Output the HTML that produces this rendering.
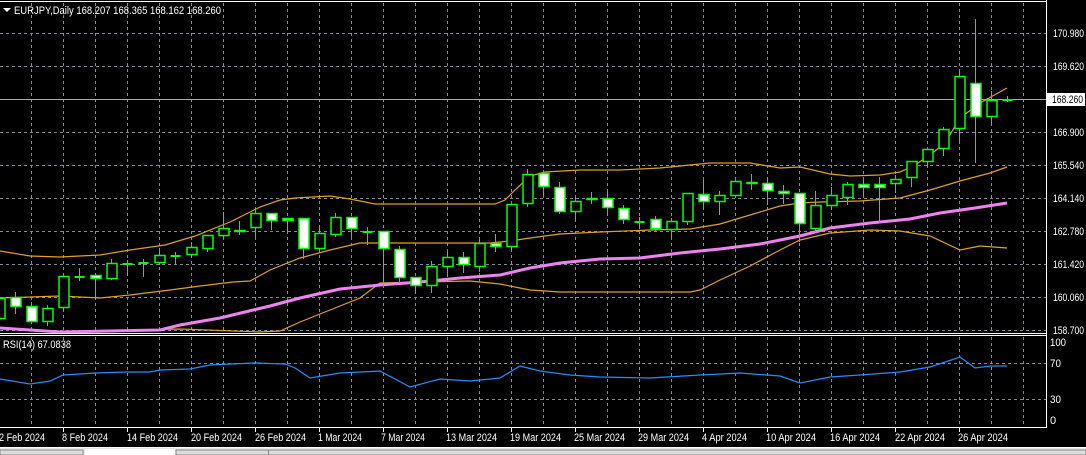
<!DOCTYPE html>
<html><head><meta charset="utf-8"><style>
html,body{margin:0;padding:0;background:#000;width:1086px;height:455px;overflow:hidden}
svg{display:block}
text{font-family:"Liberation Sans",sans-serif;font-size:11px;fill:#fff}
</style></head><body>
<svg id="s" width="1086" height="455" viewBox="0 0 1086 455" xmlns="http://www.w3.org/2000/svg">
<rect width="1086" height="455" fill="#000"/>
<line x1="0" y1="1.5" x2="1046" y2="1.5" stroke="#fff"/>
<g id="grid" stroke="#7f8c99" stroke-dasharray="3,3" stroke-width="1"></g>
<line x1="0" y1="99.5" x2="1046" y2="99.5" stroke="#a8a8a8"/>
<g id="lines" fill="none"></g>
<g id="candles"></g>
<line x1="0" y1="333.5" x2="1046" y2="333.5" stroke="#fff"/>
<line x1="0" y1="335.5" x2="1046" y2="335.5" stroke="#fff"/>
<line x1="1046.5" y1="0" x2="1046.5" y2="428" stroke="#fff"/>
<line x1="0" y1="427.5" x2="1047" y2="427.5" stroke="#fff"/>
<g id="ticks" stroke="#fff"></g>
<text x="14" y="14" textLength="207" lengthAdjust="spacingAndGlyphs">EURJPY,Daily  168.207 168.365 168.162 168.260</text>
<path d="M3 8 L11 8 L7 12 Z" fill="#fff"/>
<text x="3" y="348" textLength="68" lengthAdjust="spacingAndGlyphs">RSI(14) 67.0838</text>
<g>
<text x="1053" y="37" textLength="31" lengthAdjust="spacingAndGlyphs">170.980</text>
<text x="1053" y="70" textLength="31" lengthAdjust="spacingAndGlyphs">169.620</text>
<rect x="1047" y="93" width="38" height="13" fill="#fff"/>
<text x="1052" y="103" textLength="31" lengthAdjust="spacingAndGlyphs" style="fill:#000">168.260</text>
<text x="1053" y="136" textLength="31" lengthAdjust="spacingAndGlyphs">166.900</text>
<text x="1053" y="169" textLength="31" lengthAdjust="spacingAndGlyphs">165.540</text>
<text x="1053" y="202" textLength="31" lengthAdjust="spacingAndGlyphs">164.140</text>
<text x="1053" y="235" textLength="31" lengthAdjust="spacingAndGlyphs">162.780</text>
<text x="1053" y="268" textLength="31" lengthAdjust="spacingAndGlyphs">161.420</text>
<text x="1053" y="301" textLength="31" lengthAdjust="spacingAndGlyphs">160.060</text>
<text x="1053" y="334" textLength="31" lengthAdjust="spacingAndGlyphs">158.700</text>
<text x="1050" y="346" textLength="16" lengthAdjust="spacingAndGlyphs">100</text>
<text x="1050" y="367" textLength="11" lengthAdjust="spacingAndGlyphs">70</text>
<text x="1050" y="403" textLength="11" lengthAdjust="spacingAndGlyphs">30</text>
<text x="1050" y="424">0</text>
</g>
<g>
<text x="-1" y="441" textLength="46" lengthAdjust="spacingAndGlyphs">2 Feb 2024</text>
<text x="62" y="441" textLength="46" lengthAdjust="spacingAndGlyphs">8 Feb 2024</text>
<text x="127" y="441" textLength="51" lengthAdjust="spacingAndGlyphs">14 Feb 2024</text>
<text x="191" y="441" textLength="51" lengthAdjust="spacingAndGlyphs">20 Feb 2024</text>
<text x="255" y="441" textLength="51" lengthAdjust="spacingAndGlyphs">26 Feb 2024</text>
<text x="318" y="441" textLength="44" lengthAdjust="spacingAndGlyphs">1 Mar 2024</text>
<text x="381" y="441" textLength="44" lengthAdjust="spacingAndGlyphs">7 Mar 2024</text>
<text x="446" y="441" textLength="51" lengthAdjust="spacingAndGlyphs">13 Mar 2024</text>
<text x="510" y="441" textLength="51" lengthAdjust="spacingAndGlyphs">19 Mar 2024</text>
<text x="574" y="441" textLength="51" lengthAdjust="spacingAndGlyphs">25 Mar 2024</text>
<text x="638" y="441" textLength="51" lengthAdjust="spacingAndGlyphs">29 Mar 2024</text>
<text x="702" y="441" textLength="45" lengthAdjust="spacingAndGlyphs">4 Apr 2024</text>
<text x="766" y="441" textLength="50" lengthAdjust="spacingAndGlyphs">10 Apr 2024</text>
<text x="830" y="441" textLength="50" lengthAdjust="spacingAndGlyphs">16 Apr 2024</text>
<text x="895" y="441" textLength="50" lengthAdjust="spacingAndGlyphs">22 Apr 2024</text>
<text x="958" y="441" textLength="50" lengthAdjust="spacingAndGlyphs">26 Apr 2024</text>
</g>
<rect x="0" y="447" width="1086" height="8" fill="#e8e8e8"/>
<line x1="0" y1="447.5" x2="1086" y2="447.5" stroke="#fff"/>
<rect x="0" y="450" width="83" height="5" fill="#dcdcdc" stroke="#888" stroke-width="1"/>
<rect x="85" y="449" width="90" height="6" fill="#fff"/>
<rect x="176" y="450" width="910" height="5" fill="#dcdcdc" stroke="#888" stroke-width="1"/>
<line x1="268.5" y1="450" x2="268.5" y2="455" stroke="#888"/>
</svg>
<script>
var NS="http://www.w3.org/2000/svg";
function el(p,t,a){var e=document.createElementNS(NS,t);for(var k in a)e.setAttribute(k,a[k]);p.appendChild(e);return e;}
var g=document.getElementById('grid');
for(var x=31.5;x<1046;x+=32){el(g,'line',{x1:x,y1:3,x2:x,y2:332});el(g,'line',{x1:x,y1:337,x2:x,y2:427});}
[33,66,132,165,198,231,264,297,330].forEach(function(y){el(g,'line',{x1:0,y1:y+.5,x2:1046,y2:y+.5});});
[363,399].forEach(function(y){el(g,'line',{x1:0,y1:y+.5,x2:1046,y2:y+.5});});
var t=document.getElementById('ticks');
[63,127,191,255,319,383,447,511,575,639,703,767,831,895,959].forEach(function(x){el(t,'line',{x1:x+.5,y1:428,x2:x+.5,y2:432});});
function pl(pts,c,w){var L=document.getElementById('lines');el(L,'polyline',{points:pts.map(function(p){return p[0]+','+p[1]}).join(' '),stroke:c,'stroke-width':w});}
pl([[0,251],[30,256],[60,257],[100,255],[130,250],[165,245],[195,236],[230,222],[260,207],[280,200],[295,198],[330,196],[350,199],[375,204],[400,204],[495,204],[505,200],[515,190],[530,176],[545,172],[580,170],[620,170],[660,168],[690,165],[710,163],[750,163],[780,168],[800,167],[830,174],[850,176],[880,175],[900,172],[915,165],[930,155],[945,143],[960,118],[980,103],[1007,88]],'#e0a020',1.2);
pl([[0,298],[60,296],[100,298],[130,295],[170,290],[200,286],[233,282],[250,281],[270,270],[300,258],[330,250],[360,243],[400,243],[490,243],[510,241],[530,238],[560,234],[600,232],[650,230],[690,229],[720,224],[750,215],[780,206],[800,203],[820,202],[860,201],[900,198],[930,190],[960,181],[990,173],[1007,167]],'#e0a020',1.2);
pl([[78,331],[180,329],[260,332],[280,331],[300,322],[330,310],[360,298],[380,283],[420,282],[470,281],[500,284],[530,290],[560,292],[690,292],[700,290],[720,280],[750,266],[780,250],[800,240],[830,233],[870,230],[900,231],[930,236],[960,250],[980,246],[1007,248]],'#e0a020',1.2);
pl([[0,328],[30,330],[60,332],[160,330],[180,325],[220,318],[270,306],[300,298],[340,289],[380,285],[420,282],[460,278],[500,275],[530,268],[560,263],[600,259],[640,258],[680,253],[720,249],[760,244],[800,236],[830,228],[870,223],[910,219],[940,213],[975,208],[1007,203]],'#ee82ee',3);
pl([[0,379],[30,384],[50,381],[63,375],[95,373],[127,372],[150,372],[160,370],[190,369],[210,365],[230,364],[255,363],[285,364],[295,368],[310,378],[340,373],[380,371],[410,387],[440,379],[470,381],[500,378],[520,366],[540,371],[570,375],[600,377],[650,378],[700,375],[740,373],[780,376],[800,383],[830,377],[860,375],[900,372],[930,367],[960,357],[975,368],[990,366],[1007,366]],'#1e90ff',1.2);
var C=[[292,320,298,319,0],[292,314,297,307,1],[302,323,306,322,1],[305,326,308,322,0],[276,312,276,308,0],[268,281,276,277,2],[273,300,275,279,1],[259,280,263,279,0],[260,276,263,262,2],[259,277,262,261,2],[248,265,255,263,0],[252,264,255,254,2],[242,258,247,255,0],[235,252,235,249,0],[212,238,228,236,0],[221,235,230,232,1],[208,238,213,228,0],[213,230,213,221,1],[218,232,218,221,1],[218,259,218,249,1],[225,251,233,249,0],[213,237,217,235,0],[217,237,217,229,1],[227,245,231,230,2],[231,286,231,249,1],[246,283,249,278,1],[277,293,277,286,1],[261,293,266,286,0],[251,277,257,267,0],[252,273,257,265,1],[240,272,243,267,0],[234,252,243,247,1],[204,251,204,247,0],[169,207,174,204,0],[170,196,173,187,1],[182,214,187,212,1],[197,221,201,212,0],[192,204,198,200,1],[192,216,198,208,1],[205,224,208,220,1],[217,229,221,220,2],[216,231,219,229,1],[218,238,221,230,0],[193,225,193,222,0],[180,209,194,202,1],[191,215,195,202,0],[180,197,181,196,0],[174,190,182,184,1],[177,205,183,191,1],[185,204,191,194,1],[193,242,193,224,1],[191,232,205,229,0],[187,210,195,206,0],[182,205,184,198,0],[177,197,184,188,1],[177,223,184,188,1],[175,193,179,184,0],[161,187,161,178,0],[149,168,149,162,0],[127,156,129,149,0],[72,143,76,129,0],[19,163,83,117,1],[91,124,100,117,0],[96,102,99,101,2]];
var G=document.getElementById('candles');
C.forEach(function(c,i){var x=-0.5+16*i;
el(G,'line',{x1:x,y1:c[0],x2:x,y2:c[1],stroke:'#00ff00','stroke-width':1});
if(c[4]==2){el(G,'rect',{x:x-5,y:c[2],width:10,height:Math.max(2,c[3]-c[2]),fill:'#00ff00'});}
else el(G,'rect',{x:x-4.5,y:c[2]+.5,width:10,height:Math.max(1,c[3]-c[2]-1),fill:c[4]?'#fff':'#000',stroke:'#00ff00','stroke-width':1.5});
});
</script>
</body></html>
